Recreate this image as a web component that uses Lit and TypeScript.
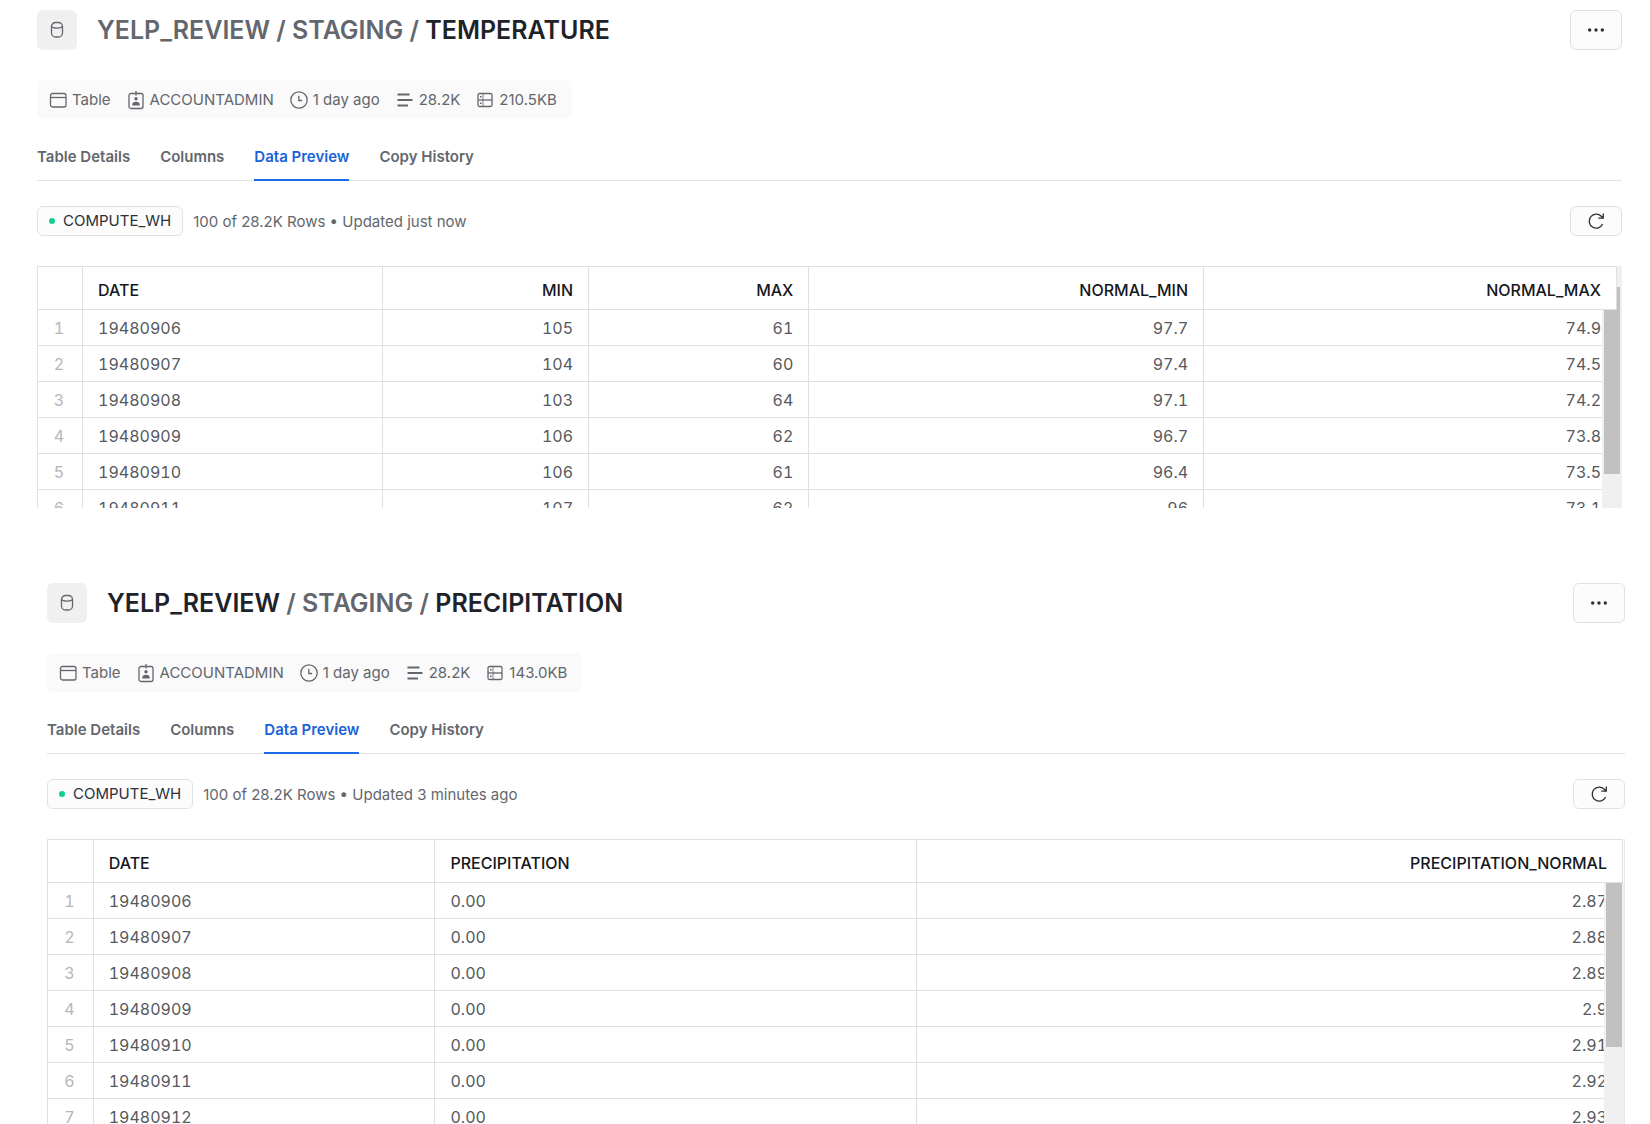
import { LitElement, html, css, svg, nothing } from "lit";
import { customElement, property } from "lit/decorators.js";
import { classMap } from "lit/directives/class-map.js";

interface Column {
  name: string;
  share: number;
  numeric: boolean;
}

interface Preview {
  id: string;
  path: { label: string; strong: boolean }[];
  size: string;
  updated: string;
  columns: Column[];
  rows: string[][];
}

const temperature: Preview = {
  id: "temperature",
  path: [
    { label: "YELP_REVIEW", strong: false },
    { label: "STAGING", strong: false },
    { label: "TEMPERATURE", strong: true },
  ],
  size: "210.5KB",
  updated: "just now",
  columns: [
    { name: "DATE", share: 19, numeric: false },
    { name: "MIN", share: 13.05, numeric: true },
    { name: "MAX", share: 13.95, numeric: true },
    { name: "NORMAL_MIN", share: 25, numeric: true },
    { name: "NORMAL_MAX", share: 26.15, numeric: true },
  ],
  rows: [
    ["19480906", "105", "61", "97.7", "74.9"],
    ["19480907", "104", "60", "97.4", "74.5"],
    ["19480908", "103", "64", "97.1", "74.2"],
    ["19480909", "106", "62", "96.7", "73.8"],
    ["19480910", "106", "61", "96.4", "73.5"],
    ["19480911", "107", "62", "96", "73.1"],
  ],
};

const precipitation: Preview = {
  id: "precipitation",
  path: [
    { label: "YELP_REVIEW", strong: true },
    { label: "STAGING", strong: false },
    { label: "PRECIPITATION", strong: true },
  ],
  size: "143.0KB",
  updated: "3 minutes ago",
  columns: [
    { name: "DATE", share: 21.7, numeric: false },
    { name: "PRECIPITATION", share: 30.6, numeric: false },
    { name: "PRECIPITATION_NORMAL", share: 44.8, numeric: true },
  ],
  rows: [
    ["19480906", "0.00", "2.87"],
    ["19480907", "0.00", "2.88"],
    ["19480908", "0.00", "2.89"],
    ["19480909", "0.00", "2.9"],
    ["19480910", "0.00", "2.91"],
    ["19480911", "0.00", "2.92"],
    ["19480912", "0.00", "2.93"],
  ],
};

const tabs = ["Table Details", "Columns", "Data Preview", "Copy History"];

const shapes = {
  database: svg`<rect x="3.5" y="1.500" width="11" height="14.500" rx="4"/><path d="M3.500 5c0 2.700 11 2.700 11 0"/>`,
  table: svg`<rect x="1.5" y="2.500" width="15.500" height="13.500" rx="2"/><path d="M1.500 6.500h15.500"/>`,
  role: svg`<rect x="2" y="2.500" width="14" height="15" rx="2"/><path d="M9 0v4.500"/><circle cx="9" cy="7.800" r="1.700" fill="currentColor" stroke="none"/><path d="M5.300 14.500v-1c0-2 1.500-2.800 3.700-2.800s3.700.8 3.700 2.800v1z" fill="currentColor" stroke="none"/>`,
  clock: svg`<circle cx="9" cy="9" r="8.200"/><path d="M8.800 4.700v4.800h3.400"/>`,
  rows: svg`<path d="M1.500 3.500h12M1.500 9h15M1.500 14.500h10.500" stroke-width="2.200"/>`,
  storage: svg`<rect x="2" y="2.500" width="14" height="13" rx="1.500"/><path d="M2 9h14"/><path d="M7 2.500v13" stroke-width=".8"/><path d="M4 5.800h1.600M4 12.300h1.600" stroke-width="1.600"/>`,
  more: svg`<g fill="currentColor" stroke="none"><circle cx="2.700" cy="9" r="1.700"/><circle cx="9" cy="9" r="1.700"/><circle cx="15.300" cy="9" r="1.700"/></g>`,
  refresh: svg`<path d="M15.600 12A7 7 0 1 1 14.300 4.300L16 5.800M16.300 1.500v4.700h-5"/>`,
};

const icon = (name: keyof typeof shapes) =>
  html`<svg class="icon" viewBox="0 0 18 18" aria-hidden="true">${shapes[name]}</svg>`;

@customElement("data-grid")
export class DataGrid extends LitElement {
  @property({ attribute: false }) columns: Column[] = [];
  @property({ attribute: false }) rows: string[][] = [];
  @property({ type: Boolean, reflect: true }) nested = false;

  static styles = css`
    :host {
      display: block;
      position: relative;
      overflow: hidden;
      padding-right: 2px;
      background: linear-gradient(#e6e7e8, #e6e7e8) right / 1px 100% no-repeat;
      color: #56595e;
      font-size: 16px;
      line-height: 20px;
    }
    :host([nested]) {
      padding-right: 5px;
      background: linear-gradient(#f0f0f0, #f0f0f0) right / 5px 100% no-repeat;
    }
    .grid {
      width: 100%;
      table-layout: fixed;
      border-collapse: separate;
      border-spacing: 0;
      border-top: 1px solid #dfe0e2;
      border-left: 1px solid #dfe0e2;
      background: #fff;
    }
    .index-col {
      width: 45px;
    }
    .cell {
      box-sizing: border-box;
      height: 36px;
      padding: 0 15px;
      border-right: 1px solid #dfe0e2;
      border-bottom: 1px solid #dfe0e2;
      font-weight: 400;
      font-variant-numeric: tabular-nums;
      text-align: left;
      white-space: nowrap;
    }
    .head {
      height: 43px;
      padding-top: 4px;
      color: #15181c;
      font-weight: 500;
    }
    .numeric {
      text-align: right;
    }
    .index {
      padding: 0 2px 0 0;
      color: #b4b6b9;
      text-align: center;
    }
    .track {
      position: absolute;
      top: 44px;
      right: 1px;
      bottom: 0;
      width: 20px;
      background: #f0f0f0;
    }
    :host([nested]) .track {
      right: 0;
    }
    .thumb {
      width: 16px;
      height: 164px;
      margin-left: 2px;
      background: #c1c1c1;
    }
    .outer-thumb {
      position: absolute;
      top: 21px;
      right: 2px;
      width: 3px;
      height: 24px;
      background: #c1c1c1;
    }
  `;

  render() {
    return html`
      <table class="grid">
        <colgroup>
          <col class="index-col" />
          ${this.columns.map((c) => html`<col style="width:${c.share}%" />`)}
        </colgroup>
        <thead>
          <tr>
            <td class="cell head"></td>
            ${this.columns.map(
              (c) => html`<th scope="col" class=${classMap({ cell: true, head: true, numeric: c.numeric })}>${c.name}</th>`
            )}
          </tr>
        </thead>
        <tbody>
          ${this.rows.map(
            (row, i) => html`<tr>
              <th scope="row" class="cell index">${i + 1}</th>
              ${row.map(
                (value, c) => html`<td class=${classMap({ cell: true, numeric: this.columns[c].numeric })}>${value}</td>`
              )}
            </tr>`
          )}
        </tbody>
      </table>
      ${this.nested ? html`<div class="outer-thumb"></div>` : nothing}
      <div class="track"><div class="thumb"></div></div>
    `;
  }
}

@customElement("table-preview")
export class TablePreview extends LitElement {
  @property({ attribute: false }) data!: Preview;
  @property({ type: Boolean }) nested = false;

  static styles = css`
    :host {
      display: flex;
      flex-direction: column;
      min-height: 0;
      color: #63676d;
      font-size: 15px;
      line-height: 20px;
    }
    .icon {
      flex: none;
      width: 18px;
      height: 18px;
      overflow: visible;
      fill: none;
      stroke: currentColor;
      stroke-width: 1.3;
    }
    .header {
      display: flex;
      align-items: center;
      gap: 20px;
      height: 40px;
    }
    .badge {
      display: grid;
      place-items: center;
      width: 40px;
      height: 40px;
      border-radius: 6px;
      background: #f0f0f1;
    }
    .title {
      flex: 1;
      margin: 0;
      font-size: 25px;
      line-height: 40px;
      font-weight: 600;
    }
    .crumb {
      color: inherit;
      text-decoration: none;
    }
    .strong {
      color: #1e232a;
    }
    .button {
      display: flex;
      align-items: center;
      justify-content: center;
      box-sizing: border-box;
      width: 52px;
      height: 30px;
      padding: 0;
      border: 1px solid #e0e1e3;
      border-radius: 6px;
      background: #fcfcfc;
      color: #2b3038;
      font: inherit;
      cursor: pointer;
    }
    .tall {
      height: 40px;
    }
    .meta {
      display: flex;
      align-self: flex-start;
      align-items: center;
      gap: 16px;
      box-sizing: border-box;
      height: 39px;
      margin: 30px 0 0;
      padding: 0 15px 0 12px;
      border-radius: 6px;
      background: #fafafa;
      list-style: none;
    }
    .fact {
      display: flex;
      align-items: center;
      gap: 5px;
    }
    .tabs {
      display: flex;
      gap: 30px;
      margin-top: 26px;
      border-bottom: 1px solid #e0e1e3;
    }
    .tab {
      height: 36px;
      margin-bottom: -1px;
      padding: 0 0 11px;
      border: 0;
      border-bottom: 2px solid transparent;
      background: none;
      color: inherit;
      font: inherit;
      font-weight: 600;
      cursor: pointer;
    }
    .active {
      border-color: #1a6ce7;
      color: #1a62d8;
    }
    .toolbar {
      display: flex;
      align-items: center;
      gap: 10px;
      margin-top: 25px;
    }
    .warehouse {
      gap: 8px;
      width: auto;
      padding: 0 11px;
    }
    .dot {
      width: 6px;
      height: 6px;
      border-radius: 50%;
      background: #12cf91;
    }
    .status {
      flex: 1;
      padding-top: 2px;
    }
    .data {
      flex: 1;
      min-height: 0;
      margin-top: 30px;
    }
  `;

  render() {
    const { path, size, updated, columns, rows, id } = this.data;
    return html`
      <header class="header">
        <span class="badge">${icon("database")}</span>
        <h1 class="title">
          ${path.map(
            (p, i) => html`${i ? " / " : nothing}<a class=${classMap({ crumb: true, strong: p.strong })} href="#${id}">${p.label}</a>`
          )}
        </h1>
        <button class="button tall" aria-label="More actions">${icon("more")}</button>
      </header>
      <ul class="meta">
        <li class="fact">${icon("table")}Table</li>
        <li class="fact">${icon("role")}ACCOUNTADMIN</li>
        <li class="fact">${icon("clock")}1 day ago</li>
        <li class="fact">${icon("rows")}28.2K</li>
        <li class="fact">${icon("storage")}${size}</li>
      </ul>
      <div class="tabs" role="tablist">
        ${tabs.map((t) => {
          const active = t === "Data Preview";
          return html`<button role="tab" aria-selected=${active} class=${classMap({ tab: true, active })}>${t}</button>`;
        })}
      </div>
      <div class="toolbar">
        <button class="button warehouse"><span class="dot"></span>COMPUTE_WH</button>
        <span class="status">100 of 28.2K Rows • Updated ${updated}</span>
        <button class="button" aria-label="Refresh">${icon("refresh")}</button>
      </div>
      <data-grid class="data" .columns=${columns} .rows=${rows} ?nested=${this.nested}></data-grid>
    `;
  }
}

@customElement("app-root")
export class AppRoot extends LitElement {
  static styles = css`
    :host {
      display: flex;
      flex-direction: column;
      gap: 75px;
      box-sizing: border-box;
      height: 100vh;
      padding-top: 10px;
      overflow: hidden;
      background: #fff;
      font-family: Inter, "Liberation Sans", sans-serif;
    }
    .first {
      flex: 0 0 498px;
      margin: 0 28px 0 37px;
    }
    .second {
      flex: 1;
      margin: 0 25px 0 47px;
    }
  `;

  render() {
    return html`
      <table-preview class="first" .data=${temperature} nested></table-preview>
      <table-preview class="second" .data=${precipitation}></table-preview>
    `;
  }
}
